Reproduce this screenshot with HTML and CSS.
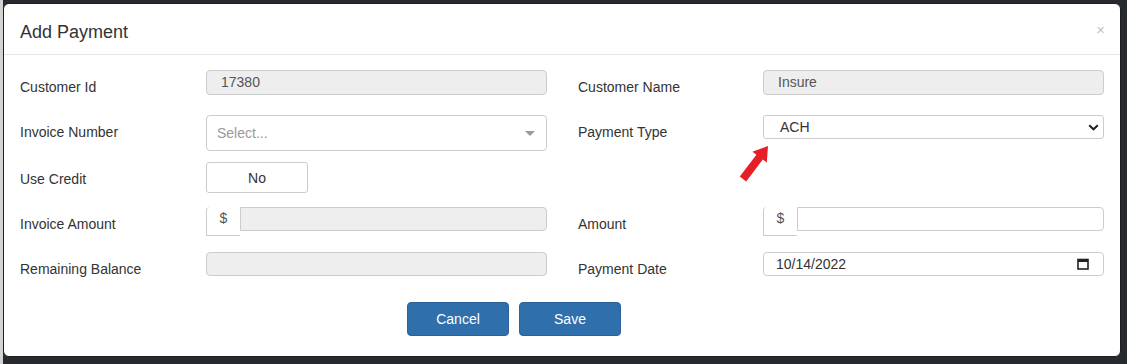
FILE: index.html
```html
<!DOCTYPE html>
<html lang="en">
<head>
    <meta charset="UTF-8">
    <title>Add Payment</title>
    <link rel="stylesheet" href="styles.css">
</head>
<body>
    <div class="modal">
        <div class="modal-header">
            <h4>Add Payment</h4>
            <span class="close">&times;</span>
        </div>

        <div class="modal-body">
            <label class="field-label">Customer Id</label>
            <div class="control readonly short">17380</div>
            <div></div>
            <label class="field-label">Customer Name</label>
            <div class="control readonly short">Insure</div>

            <label class="field-label">Invoice Number</label>
            <div class="control picker">
                <span class="placeholder">Select...</span>
                <span class="caret"></span>
            </div>
            <div></div>
            <label class="field-label">Payment Type</label>
            <div class="control native-select">
                <span>ACH</span>
                <svg width="11" height="7" viewBox="0 0 11 7"><path d="M1.2 1.2 L5.5 5.3 L9.8 1.2" fill="none" stroke="#222" stroke-width="2"/></svg>
            </div>

            <label class="field-label">Use Credit</label>
            <div><button class="toggle">No</button></div>
            <div></div>
            <div></div>
            <div></div>

            <label class="field-label">Invoice Amount</label>
            <div class="input-group">
                <span class="addon">$</span>
                <div class="control readonly grow"></div>
            </div>
            <div></div>
            <label class="field-label">Amount</label>
            <div class="input-group">
                <span class="addon">$</span>
                <div class="control grow"></div>
            </div>

            <label class="field-label">Remaining Balance</label>
            <div class="control readonly"></div>
            <div></div>
            <label class="field-label">Payment Date</label>
            <div class="control date">
                <span>10/14/2022</span>
                <svg width="12" height="12" viewBox="0 0 12 12"><rect x="1" y="1.5" width="10" height="9.5" fill="none" stroke="#222" stroke-width="1.6"/><rect x="1" y="1" width="10" height="3" fill="#222"/></svg>
            </div>
        </div>

        <div class="modal-footer">
            <button class="btn">Cancel</button>
            <button class="btn">Save</button>
        </div>

        <svg class="annotation" width="34" height="40" viewBox="0 0 34 40">
            <polygon points="32,3 30.8,19.6 26.8,16.6 10.2,38.4 3.8,33.6 20.4,11.8 16.4,8.8" fill="#e61e26"/>
        </svg>
    </div>
</body>
</html>
```

FILE: styles.css
```css
* {
    margin: 0;
    padding: 0;
    box-sizing: border-box;
}

body {
    font-family: 'Liberation Sans', Arial, sans-serif;
    font-size: 14px;
    color: #333;
    background-color: #262a2e;
    border-left: 3px solid #d2d2d2;
    padding: 3px 6px 7px 0;
    height: 364px;
}

.modal {
    position: relative;
    background: white;
    border: 1px solid #1d1d1d;
    border-radius: 6px;
    height: 354px;
}

.modal-header {
    display: flex;
    justify-content: space-between;
    align-items: flex-start;
    padding: 18px 16px 12px 16px;
    border-bottom: 1px solid #e5e5e5;
}

.modal-header h4 {
    font-size: 18px;
    font-weight: 400;
    line-height: 20px;
    color: #333;
}

.close {
    font-size: 15px;
    line-height: 20px;
    color: #c2c2c2;
    margin-right: -1px;
    margin-top: -2px;
}

.modal-body {
    display: grid;
    grid-template-columns: 186px 341px 31px 185px 341px;
    grid-template-rows: 45px 47px 45px 45px 45px;
    padding: 15px 16px 0 16px;
}

.field-label {
    padding-top: 7px;
    line-height: 20px;
}

.control {
    height: 24px;
    border: 1px solid #ccc;
    border-radius: 4px;
    background: white;
    color: #555;
    line-height: 22px;
    padding: 0 14px;
}

.control.short {
    height: 25px;
    line-height: 23px;
}

.readonly {
    background: #eee;
}

.picker {
    height: 36px;
    display: flex;
    align-items: center;
    justify-content: space-between;
    padding: 0 11px 0 10px;
}

.placeholder {
    color: #999;
}

.caret {
    width: 0;
    height: 0;
    border-left: 5px solid transparent;
    border-right: 5px solid transparent;
    border-top: 5px solid #999;
}

.native-select {
    display: flex;
    align-items: center;
    justify-content: space-between;
    padding: 0 4px 0 16px;
    border-radius: 3px;
    color: #333;
}

.toggle {
    width: 102px;
    height: 31px;
    border: 1px solid #ccc;
    border-radius: 3px;
    background: white;
    font-family: inherit;
    font-size: 14px;
    color: #333;
}

.input-group {
    display: flex;
    align-items: flex-start;
}

.addon {
    width: 34px;
    height: 29px;
    border: 1px solid #ccc;
    border-right: none;
    border-top: none;
    border-radius: 4px 0 0 0;
    padding-top: 3px;
    text-align: center;
    color: #555;
}

.grow {
    flex: 1;
    border-radius: 0 4px 4px 0;
}

.date {
    display: flex;
    align-items: center;
    justify-content: space-between;
    padding: 0 14px 0 12px;
    color: #333;
}

.modal-footer {
    display: flex;
    gap: 10px;
    padding: 5px 0 0 403px;
}

.btn {
    width: 102px;
    height: 34px;
    background: #2f6fac;
    border: 1px solid #2a6299;
    border-radius: 4px;
    color: white;
    font-family: inherit;
    font-size: 14px;
}

.annotation {
    position: absolute;
    left: 732px;
    top: 139px;
}
```
